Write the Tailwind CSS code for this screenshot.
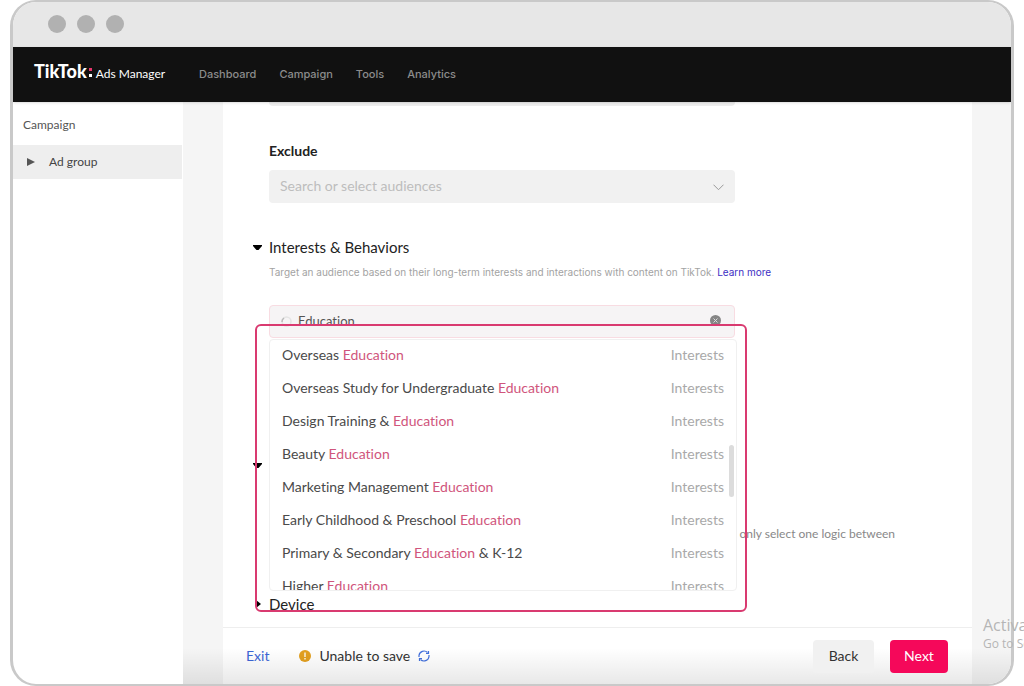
<!DOCTYPE html>
<html lang="en">
<head>
    <meta charset="UTF-8">
    <meta name="viewport" content="width=device-width, initial-scale=1.0">
    <title>TikTok Ads Manager</title>
    <script src="https://cdn.jsdelivr.net/npm/@tailwindcss/browser@4"></script>
</head>
<body class="relative overflow-x-hidden bg-white px-[10px] font-[Lato,sans-serif] text-[#333] [font-variant-ligatures:none]">

<!-- browser window -->
<div class="relative flex min-h-screen flex-col overflow-hidden rounded-[26px] border-x-3 border-y-2 border-[#c9c9c9] bg-white">

    <div class="flex h-[45px] shrink-0 items-center gap-[11px] bg-[#e7e7e7] px-[35px] pb-[2px]">
        <span class="size-[18px] rounded-full bg-[#b1b1b1]"></span>
        <span class="size-[18px] rounded-full bg-[#b1b1b1]"></span>
        <span class="size-[18px] rounded-full bg-[#b1b1b1]"></span>
    </div>

    <!-- top nav -->
    <header class="z-10 flex h-[55px] shrink-0 items-center bg-[#111] px-[21px] shadow-sm">
        <a href="#" class="flex w-[165px] items-baseline gap-1 pb-[6px] text-white">
            <span class="flex items-center gap-[2px] text-[18px] leading-5 font-black">TikTok
                <span class="flex flex-col gap-[3px] pt-1"><i class="size-[3px] bg-[#e8356d]"></i><i class="size-[3px] bg-white"></i></span>
            </span>
            <span class="text-[12px]">Ads Manager</span>
        </a>
        <nav class="flex gap-[23px] font-[Inter,sans-serif] text-[11px] font-medium text-[#8c8c8c]">
            <a href="#">Dashboard</a>
            <a href="#">Campaign</a>
            <a href="#">Tools</a>
            <a href="#">Analytics</a>
        </nav>
    </header>

    <div class="flex grow">
        <!-- sidebar -->
        <aside class="w-[170px] shrink-0 text-[12px]">
            <a href="#" class="flex h-[43px] items-center px-[10px] pt-[2px] text-[#555]">Campaign</a>
            <a href="#" class="mr-px flex h-[34px] items-center gap-[14px] bg-[#eee] px-[14px] text-[#444]">
                <svg class="size-2" viewBox="0 0 8 8" fill="#555"><path d="M0 0l8 4-8 4z"/></svg>
                Ad group
            </a>
        </aside>

        <div class="flex grow bg-[#f5f5f5] pr-[39px] pl-[40px]">
            <main class="flex grow flex-col bg-white">
                <div class="relative grow px-[46px]">
                    <div class="h-1 w-[466px] rounded-b bg-[#eee]"></div>

                    <label for="exclude" class="mt-[35px] block text-[14px] leading-5 font-bold text-[#222]">Exclude</label>
                    <div class="relative mt-[9px] w-[466px]">
                        <input id="exclude" type="text" placeholder="Search or select audiences" class="h-[33px] w-full rounded bg-[#f1f1f1] px-[11px] pb-[2px] text-[14px] placeholder:text-[#bdbdbd]">
                        <svg class="absolute top-[14px] right-[11px] h-[7px] w-[11px]" viewBox="0 0 11 7" fill="none" stroke="#999"><path d="M.5.7l5 5 5-5"/></svg>
                    </div>

                    <h2 class="-ml-4 mt-[34px] flex items-center gap-[7px] text-[15px] leading-5 text-[#222]">
                        <svg class="h-[5px] w-[9px]" viewBox="0 0 9 5" fill="#000"><path d="M0 0h9v1L5.500 5h-2L0 1z"/></svg>
                        Interests &amp; Behaviors
                    </h2>
                    <p class="mt-[7px] font-[Inter,sans-serif] text-[10px] leading-4 whitespace-nowrap text-[#a3a3a3]">Target an audience based on their long-term interests and interactions with content on TikTok. <a href="#" class="text-[#3d2fc4]">Learn more</a></p>

                    <div class="relative mt-[25px] w-[466px]">
                        <label for="interest" class="sr-only">Interests</label>
                        <input id="interest" type="text" value="Education" class="h-[33px] w-full rounded border border-[#f8dce2] bg-[#f6f4f5] pr-8 pb-[2px] pl-[28px] text-[13px] text-[#555]">
                        <svg class="absolute top-[11px] left-3 size-[11px]" viewBox="0 0 11 11" fill="none" stroke-width="1.500"><circle cx="5.500" cy="5.500" r="4.500" stroke="#e4e4e4"/><path d="M1 6a4.500 4.500 0 0 1 2-4" stroke="#bbb"/></svg>
                        <button type="button" aria-label="Clear" class="absolute top-[10px] right-[14px] size-[11px]">
                            <svg class="size-[11px]" viewBox="0 0 11 11"><circle cx="5.500" cy="5.500" r="5.500" fill="#858585"/><path d="M3.500 3.500l4 4m0-4l-4 4" stroke="#ddd"/></svg>
                        </button>

                        <!-- suggestions -->
                        <div class="absolute top-[34px] left-0 z-10 h-[252px] w-[468px] overflow-hidden rounded border border-[#f0f0f0] bg-white">
                            <ul class="-mt-[2px] px-3 text-[14px] leading-[33px] text-[#4a4a4a]">
                                <li class="flex justify-between"><span>Overseas <b class="font-normal text-[#d0557c]">Education</b></span><span class="text-[#a9a9a9]">Interests</span></li>
                                <li class="flex justify-between"><span>Overseas Study for Undergraduate <b class="font-normal text-[#d0557c]">Education</b></span><span class="text-[#a9a9a9]">Interests</span></li>
                                <li class="flex justify-between"><span>Design Training &amp; <b class="font-normal text-[#d0557c]">Education</b></span><span class="text-[#a9a9a9]">Interests</span></li>
                                <li class="flex justify-between"><span>Beauty <b class="font-normal text-[#d0557c]">Education</b></span><span class="text-[#a9a9a9]">Interests</span></li>
                                <li class="flex justify-between"><span>Marketing Management <b class="font-normal text-[#d0557c]">Education</b></span><span class="text-[#a9a9a9]">Interests</span></li>
                                <li class="flex justify-between"><span>Early Childhood &amp; Preschool <b class="font-normal text-[#d0557c]">Education</b></span><span class="text-[#a9a9a9]">Interests</span></li>
                                <li class="flex justify-between"><span>Primary &amp; Secondary <b class="font-normal text-[#d0557c]">Education</b> &amp; K-12</span><span class="text-[#a9a9a9]">Interests</span></li>
                                <li class="flex justify-between"><span>Higher <b class="font-normal text-[#d0557c]">Education</b></span><span class="text-[#a9a9a9]">Interests</span></li>
                            </ul>
                            <span class="absolute top-[105px] right-[2px] h-[52px] w-[5px] rounded-full bg-[#dcdcdc]"></span>
                        </div>

                        <!-- highlight frame -->
                        <div class="pointer-events-none absolute top-[19px] -left-[14px] z-20 h-[288px] w-[492px] rounded-md border-2 border-[#d93a70]"></div>
                    </div>

                    <div class="-ml-4 mt-[117px] flex h-5 items-center gap-[7px]">
                        <svg class="h-[5px] w-[9px]" viewBox="0 0 9 5" fill="#000"><path d="M0 0h9v1L5.500 5h-2L0 1z"/></svg>
                    </div>
                    <p class="mt-[51px] pr-[31px] text-right text-[12px] leading-4 text-[#888]">can only select one logic between</p>

                    <h2 class="-ml-4 mt-[52px] mb-[11px] flex items-center gap-2 text-[15px] leading-5 text-[#222]">
                        <svg class="ml-[3px] h-2 w-[5px]" viewBox="0 0 5 8" fill="#000"><path d="M0 0l5 4-5 4z"/></svg>
                        Device
                    </h2>
                </div>

                <!-- actions -->
                <footer class="flex h-[57px] items-center border-t border-[#eee] pr-[24px] pl-[23px] text-[14px]">
                    <a href="#" class="pb-px text-[#3b66d6]">Exit</a>
                    <svg class="ml-[30px] size-3" viewBox="0 0 12 12"><circle cx="6" cy="6" r="6" fill="#e3a01f"/><path d="M6 2.500v4.500M6 8v1.500" stroke="#fff" stroke-width="1.300"/></svg>
                    <span class="ml-2 pb-px">Unable to save</span>
                    <button type="button" aria-label="Retry" class="ml-2">
                        <svg class="size-3" viewBox="0 0 12 12" fill="none" stroke="#4270dd" stroke-width="1.200"><path d="M1 7V5.500A5 5 0 0 1 9.500 2.500M11 5v1.500A5 5 0 0 1 2.500 9.500"/><path d="M10.500 1v2.500H8M1.500 11V8.500H4"/></svg>
                    </button>
                    <button type="button" class="z-10 ml-auto h-[33px] w-[61px] rounded bg-[#f1f1f1] pb-[2px]">Back</button>
                    <button type="button" class="z-10 ml-4 h-[33px] w-[58px] rounded bg-[#f5085a] pb-[2px] text-white">Next</button>
                </footer>
            </main>
        </div>
    </div>

    <div class="pointer-events-none absolute right-0 bottom-0 left-[170px] h-9 bg-linear-to-b from-transparent to-black/9"></div>
</div>

<!-- system watermark -->
<div class="absolute top-[614px] left-[calc(100%-41px)] font-['Open_Sans',sans-serif] whitespace-nowrap text-[#b5b5b5]">
    <p class="text-[16px] leading-[22px]">Activate</p>
    <p class="text-[12px] leading-4">Go to Settings</p>
</div>

</body>
</html>
